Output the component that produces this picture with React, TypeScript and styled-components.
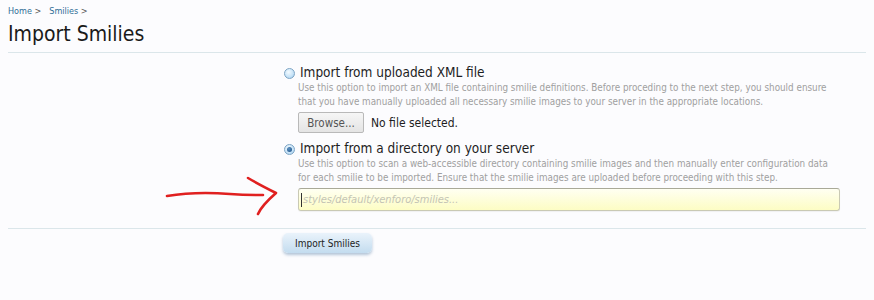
import React from "react";
import styled, { createGlobalStyle } from "styled-components";

const Global = createGlobalStyle`
  html, body { margin: 0; padding: 0; background: #fcfcfe; }
  body { font-family: "DejaVu Sans", Verdana, sans-serif; font-stretch: condensed; }
`;

const Page = styled.div`
  position: relative;
  width: 874px;
  height: 300px;
  padding: 0 8px;
  box-sizing: border-box;
  overflow: hidden;
`;

const Breadcrumb = styled.nav`
  display: flex;
  gap: 8px;
  padding-top: 4px;
  height: 14px;
  font-size: 9px;
  line-height: 14px;
`;

const Crumb = styled.a`
  color: #2f6e96;
  text-decoration: none;
  &::after { content: " >"; color: #555; }
`;

const Title = styled.h1`
  margin: 0;
  padding: 2px 0 0;
  height: 32px;
  font-size: 21px;
  line-height: 28px;
  font-weight: normal;
  color: #1a1a1a;
  border-bottom: 1px solid #dbe6ea;
`;

const FormBlock = styled.div`
  display: grid;
  grid-template-columns: 276px 1fr;
  padding: 12px 26px 17px 0;
  border-bottom: 1px solid #dbe6ea;
`;

const Options = styled.div`
  grid-column: 2;
  display: flex;
  flex-direction: column;
  gap: 8px;
`;

const Option = styled.div`
  display: grid;
  grid-template-columns: 11px 1fr;
  column-gap: 3px;
`;

const Radio = styled.span<{ $checked?: boolean }>`
  width: 9px;
  height: 9px;
  margin-top: 3px;
  border-radius: 50%;
  border: 1px solid #7da4c4;
  background: radial-gradient(circle at 40% 35%, #f4fbff 0%, #c5e2f7 60%, #9ccaeb 100%);
  position: relative;
  ${(p) =>
    p.$checked &&
    `&::after {
      content: "";
      position: absolute;
      left: 2px; top: 2px;
      width: 5px; height: 5px;
      border-radius: 50%;
      background: radial-gradient(circle at 40% 35%, #5a8fc0, #1c4f85);
    }`}
`;

const Label = styled.div`
  padding-left: 2px;
  font-size: 13.5px;
  line-height: 15px;
  color: #1e1e1e;
`;

const Explain = styled.div`
  grid-column: 2;
  font-size: 9.8px;
  line-height: 14px;
  color: #a0a0a0;
  margin-top: 1px;
`;

const FileRow = styled.div`
  grid-column: 2;
  display: flex;
  align-items: center;
  gap: 7px;
  margin-top: 3px;
  font-size: 12px;
  color: #1e1e1e;
`;

const Browse = styled.span`
  display: inline-flex;
  align-items: center;
  justify-content: center;
  width: 66px;
  height: 21px;
  box-sizing: border-box;
  border: 1px solid #b9b9b9;
  border-radius: 2px;
  background: linear-gradient(#f6f6f6, #e4e4e4);
  color: #555;
  font-size: 11.5px;
`;

const TextInput = styled.div`
  grid-column: 2;
  margin-top: 3px;
  height: 23px;
  box-sizing: border-box;
  border: 1px solid #c9c9b4;
  border-top-color: #a9a998;
  border-radius: 3px;
  background: linear-gradient(#fffff2, #fdfdc4);
  display: flex;
  align-items: center;
  padding-left: 2px;
  font-size: 11px;
  font-style: italic;
  color: #c4c4b4;
  box-shadow: 0 1px 1px rgba(0,0,0,0.05);
  &::before {
    content: "";
    width: 1px;
    height: 14px;
    background: #333;
    margin-right: 1px;
  }
`;

const Submit = styled.div`
  display: flex;
  padding: 4px 0 0 275px;
`;

const SubmitButton = styled.span`
  display: inline-flex;
  align-items: center;
  justify-content: center;
  width: 89px;
  height: 20px;
  border-radius: 5px;
  background: linear-gradient(#eaf3fb, #c3dcef);
  box-shadow: 0 2px 3px rgba(90, 130, 170, 0.45);
  font-size: 10px;
  color: #222;
`;

const Arrow = styled.svg`
  position: absolute;
  left: 160px;
  top: 172px;
  width: 125px;
  height: 50px;
  pointer-events: none;
`;

export default function App() {
  return (
    <Page>
      <Global />
      <Breadcrumb>
        <Crumb href="#">Home</Crumb>
        <Crumb href="#">Smilies</Crumb>
      </Breadcrumb>
      <Title>Import Smilies</Title>
      <FormBlock>
        <Options>
          <Option>
            <Radio />
            <Label>Import from uploaded XML file</Label>
            <Explain>
              Use this option to import an XML file containing smilie definitions. Before proceding to the next step, you should ensure
              <br />
              that you have manually uploaded all necessary smilie images to your server in the appropriate locations.
            </Explain>
            <FileRow>
              <Browse>Browse...</Browse>
              No file selected.
            </FileRow>
          </Option>
          <Option>
            <Radio $checked />
            <Label>Import from a directory on your server</Label>
            <Explain>
              Use this option to scan a web-accessible directory containing smilie images and then manually enter configuration data
              <br />
              for each smilie to be imported. Ensure that the smilie images are uploaded before proceeding with this step.
            </Explain>
            <TextInput>styles/default/xenforo/smilies...</TextInput>
          </Option>
        </Options>
      </FormBlock>
      <Submit>
        <SubmitButton>Import Smilies</SubmitButton>
      </Submit>
      <Arrow viewBox="0 0 125 50">
        <path d="M7 24 C25 21, 45 20, 70 22 C85 23, 95 23, 103 23" stroke="#e02020" strokeWidth="2.6" fill="none" strokeLinecap="round" />
        <path d="M88 6 C98 12, 108 17, 116 21 C108 28, 101 35, 98 42" stroke="#e02020" strokeWidth="2.6" fill="none" strokeLinecap="round" strokeLinejoin="round" />
      </Arrow>
    </Page>
  );
}
